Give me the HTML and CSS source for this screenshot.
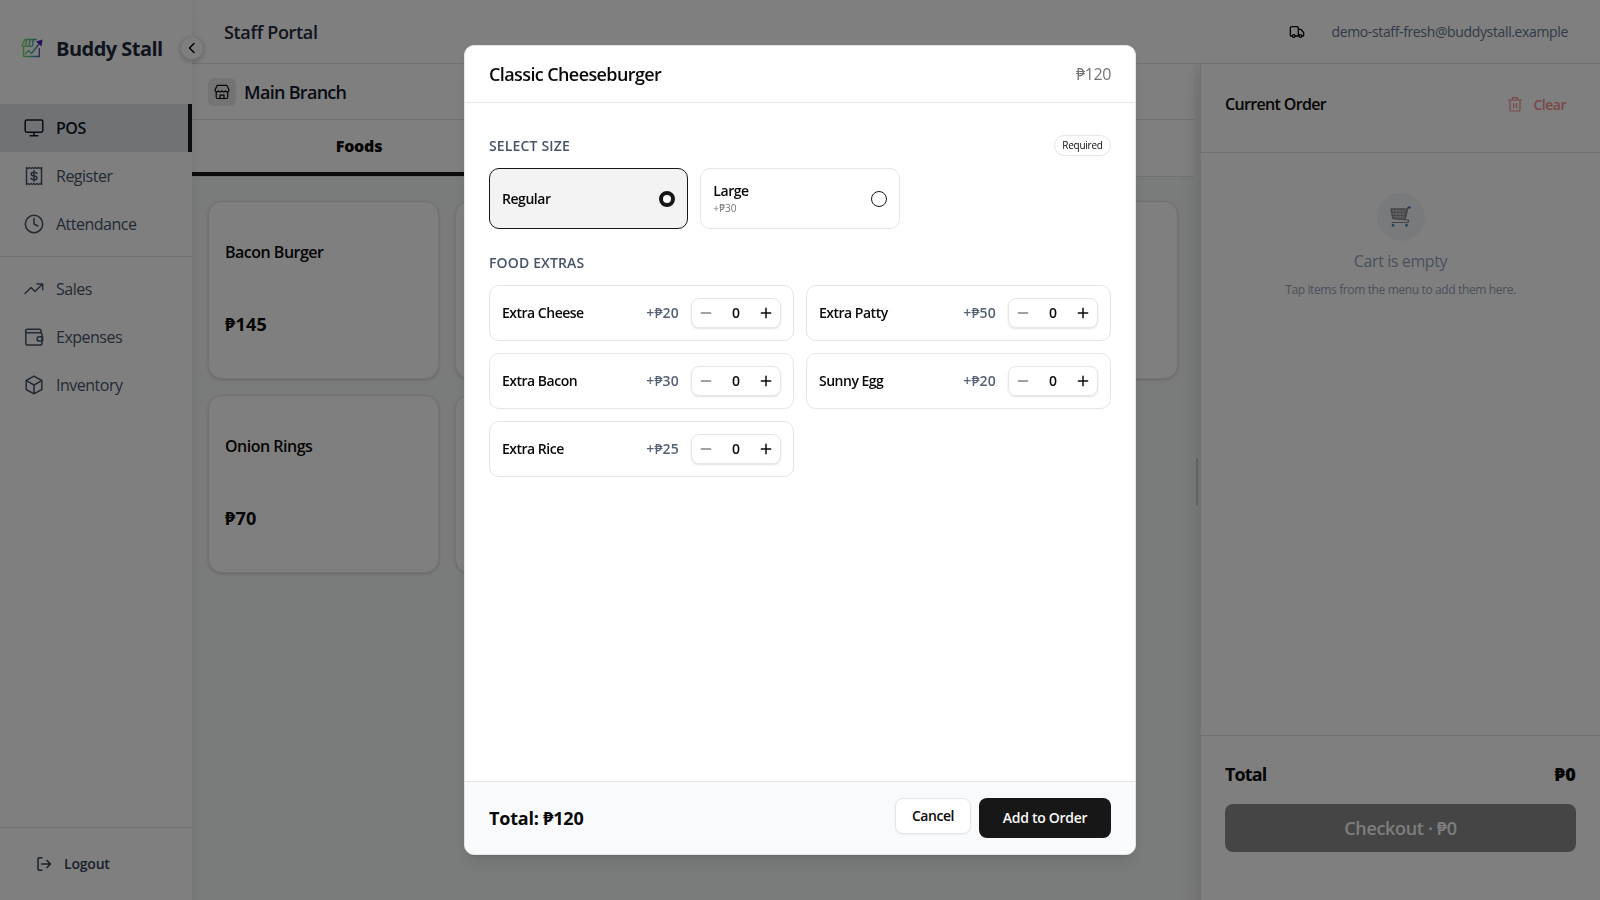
FILE: index.html
```html
<!DOCTYPE html>
<html lang="en">
<head>
    <meta charset="UTF-8">
    <title>Buddy Stall - Staff Portal</title>
    <link rel="stylesheet" href="styles.css">
</head>
<body>
    <div class="app">
        <aside class="sidebar">
            <div class="brand">
                <svg class="logo" viewBox="0 0 22 20">
                    <defs>
                        <linearGradient id="logoGradient" x1="0" y1="0" x2="22" y2="0" gradientUnits="userSpaceOnUse">
                            <stop offset="0" stop-color="#8be04a"/>
                            <stop offset="0.5" stop-color="#45b89a"/>
                            <stop offset="1" stop-color="#5b2fc0"/>
                        </linearGradient>
                    </defs>
                    <path d="M15 1.500H4L1 7c0 2 3.400 2 3.600 0 .2 2 3.400 2 3.600 0 .2 2 3.400 2 3.600 0M5.800 2L4.600 7M9 2l-.8 5M12 2l-.2 5M2.500 9.500v9h15.800v-8"/>
                    <path d="M4 16l3.500-3.500 3 3L18 6"/>
                    <path class="logo-tip" d="M15 3.500l6.500-2-1 7z"/>
                </svg>
                <h1>Buddy Stall</h1>
            </div>
            <button class="collapse" type="button">
                <svg viewBox="0 0 16 16"><path d="M10 3.500L5.500 8l4.500 4.500"/></svg>
            </button>
            <nav class="menu">
                <a class="menu-item active">
                    <svg viewBox="0 0 20 20"><rect x="1.200" y="2" width="17.600" height="12.200" rx="1.600"/><path d="M10 14.500v3M6.200 17.700h7.600"/></svg>
                    <span>POS</span>
                </a>
                <a class="menu-item">
                    <svg viewBox="0 0 20 20"><path d="M2.500 1.500l1.500 1 1.500-1 1.500 1 1.500-1 1.500 1 1.500-1 1.500 1 1.500-1 1.500 1 1.500-1v17l-1.500-1-1.500 1-1.500-1-1.500 1-1.500-1-1.500 1-1.500-1-1.500 1-1.500-1-1.500 1z"/><path d="M13 7.500C12.500 6.500 11.500 6.300 10 6.300c-3.800 0-3.800 3.600 0 3.700 3.900.1 3.900 3.700 0 3.700-1.500 0-2.600-.3-3-1.300M10 4.700v10.600"/></svg>
                    <span>Register</span>
                </a>
                <a class="menu-item">
                    <svg viewBox="0 0 20 20"><circle cx="10" cy="10" r="8.700"/><path d="M10 4.500V10l3.800 2"/></svg>
                    <span>Attendance</span>
                </a>
                <hr>
                <a class="menu-item">
                    <svg viewBox="0 0 20 20"><path d="M1 14.500l6-6 4 4 7.500-7.500M13 5h5.700v5.700"/></svg>
                    <span>Sales</span>
                </a>
                <a class="menu-item">
                    <svg viewBox="0 0 20 20"><path d="M17 5.500V4c0-1-.7-1.800-1.800-1.800H3.500C.9 2.200.9 5.700 3.500 5.700H16c1.200 0 2 .6 2 1.800v8.700c0 1-.7 1.800-1.800 1.800H3.800c-1.200 0-2-.8-2-1.800V4"/><path d="M18.600 9.800h-3.400a2.100 2.100 0 0 0 0 4.200h3.400z"/></svg>
                    <span>Expenses</span>
                </a>
                <a class="menu-item">
                    <svg viewBox="0 0 20 20"><path d="M10 1.200l7.800 4.300v9L10 18.800l-7.800-4.300v-9zM2.400 5.600L10 10l7.600-4.400M10 10v8.600"/></svg>
                    <span>Inventory</span>
                </a>
            </nav>
            <div class="logout">
                <svg viewBox="0 0 16 16"><path d="M6 1.800H3.200c-.8 0-1.200.5-1.200 1.200v10c0 .8.500 1.200 1.200 1.200H6M5.500 8h9M11 4.500L14.500 8 11 11.500"/></svg>
                <span>Logout</span>
            </div>
        </aside>

        <div class="page">
            <header class="topbar">
                <h2>Staff Portal</h2>
                <div class="account">
                    <svg viewBox="0 0 24 24"><path d="M14 18V6a2 2 0 0 0-2-2H4a2 2 0 0 0-2 2v11a1 1 0 0 0 1 1h2M15 18H9M19 18h2a1 1 0 0 0 1-1v-3.650a1 1 0 0 0-.22-.624l-3.480-4.350A1 1 0 0 0 17.520 8H14"/><circle cx="17" cy="18" r="2"/><circle cx="7" cy="18" r="2"/></svg>
                    <span>demo-staff-fresh@buddystall.example</span>
                </div>
            </header>
            <div class="workspace">
                <main class="catalog">
                    <div class="branch">
                        <span class="branch-icon">
                            <svg viewBox="0 0 16 16"><path d="M1 6l1.800-4c.2-.4.500-.600.900-.600h8.600c.4 0 .7.200.9.600L15 6c0 1.200-.8 1.800-1.700 1.800S11.500 7 11.500 7s-.8.800-1.700.8S8 7 8 7s-.8.800-1.800.8S4.500 7 4.500 7s-.9.800-1.800.8S1 7.200 1 6zM2.200 8v5c0 1 .5 1.500 1.400 1.500h8.800c.9 0 1.400-.5 1.400-1.500V8M6 14.500v-3.300h4v3.300"/></svg>
                        </span>
                        <h3>Main Branch</h3>
                    </div>
                    <div class="tabs">
                        <div class="tab selected">Foods</div>
                        <div class="tab"></div>
                        <div class="tab"></div>
                    </div>
                    <div class="products">
                        <div class="product"><h4>Bacon Burger</h4><p>₱145</p></div>
                        <div class="product"></div>
                        <div class="product"></div>
                        <div class="product"></div>
                        <div class="product"><h4>Onion Rings</h4><p>₱70</p></div>
                        <div class="product"></div>
                    </div>
                </main>
                <div class="resizer"><i></i></div>
                <section class="cart">
                    <div class="cart-header">
                        <h3>Current Order</h3>
                        <div class="clear">
                            <svg viewBox="0 0 16 16"><path d="M1.500 4h13M5.500 4V1.700h5V4M3 4v9.700c0 .7.500 1.300 1.200 1.300h7.600c.7 0 1.200-.6 1.200-1.300V4M6.600 7.500v4M9.400 7.500v4"/></svg>
                            <span>Clear</span>
                        </div>
                    </div>
                    <div class="cart-empty">
                        <div class="cart-circle">
                            <svg viewBox="0 0 22 22">
                                <path d="M1 3h16l-2 10.500-12-1z" fill="#bfc0c4" stroke="#77787e"/>
                                <path d="M4.500 3l.5 10M8 3l.3 10M11.500 3v10M14.500 3l-.8 10.500M1.500 6.200h15M2 9.500h14" stroke="#77787e" stroke-width=".8"/>
                                <path d="M20 1.500h-2L15 13.500l2 .5c2-1 2 2.500 0 2.500H2" stroke="#85757e" stroke-width="1.200"/>
                                <path d="M18.500 1.500h1.500" stroke="#2c5f9e" stroke-width="2"/>
                                <path d="M3 19v.5M16.500 19v.5" stroke="#2c6db5" stroke-width="2.600"/>
                            </svg>
                        </div>
                        <p class="empty-title">Cart is empty</p>
                        <p class="empty-hint">Tap items from the menu to add them here.</p>
                    </div>
                    <div class="cart-footer">
                        <div class="cart-total"><span>Total</span><b>₱0</b></div>
                        <button class="checkout" type="button">Checkout · ₱0</button>
                    </div>
                </section>
            </div>
        </div>
    </div>

    <div class="overlay">
        <div class="modal">
            <div class="modal-header">
                <h2>Classic Cheeseburger</h2>
                <span>₱120</span>
            </div>
            <div class="modal-body">
                <div class="group-title">
                    <h3>SELECT SIZE</h3>
                    <span class="pill">Required</span>
                </div>
                <div class="sizes">
                    <div class="size chosen">
                        <div class="size-name">Regular</div>
                        <i class="radio"></i>
                    </div>
                    <div class="size">
                        <div class="size-name">Large<small>+₱30</small></div>
                        <i class="radio"></i>
                    </div>
                </div>
                <div class="group-title extras-title">
                    <h3>FOOD EXTRAS</h3>
                </div>
                <div class="extras">
                    <div class="extra">
                        <span class="extra-name">Extra Cheese</span><span class="extra-price">+₱20</span>
                        <div class="stepper">
                            <svg class="minus" viewBox="0 0 24 24"><path d="M5 12h14"/></svg><b>0</b><svg viewBox="0 0 24 24"><path d="M5 12h14M12 5v14"/></svg>
                        </div>
                    </div>
                    <div class="extra">
                        <span class="extra-name">Extra Patty</span><span class="extra-price">+₱50</span>
                        <div class="stepper">
                            <svg class="minus" viewBox="0 0 24 24"><path d="M5 12h14"/></svg><b>0</b><svg viewBox="0 0 24 24"><path d="M5 12h14M12 5v14"/></svg>
                        </div>
                    </div>
                    <div class="extra">
                        <span class="extra-name">Extra Bacon</span><span class="extra-price">+₱30</span>
                        <div class="stepper">
                            <svg class="minus" viewBox="0 0 24 24"><path d="M5 12h14"/></svg><b>0</b><svg viewBox="0 0 24 24"><path d="M5 12h14M12 5v14"/></svg>
                        </div>
                    </div>
                    <div class="extra">
                        <span class="extra-name">Sunny Egg</span><span class="extra-price">+₱20</span>
                        <div class="stepper">
                            <svg class="minus" viewBox="0 0 24 24"><path d="M5 12h14"/></svg><b>0</b><svg viewBox="0 0 24 24"><path d="M5 12h14M12 5v14"/></svg>
                        </div>
                    </div>
                    <div class="extra">
                        <span class="extra-name">Extra Rice</span><span class="extra-price">+₱25</span>
                        <div class="stepper">
                            <svg class="minus" viewBox="0 0 24 24"><path d="M5 12h14"/></svg><b>0</b><svg viewBox="0 0 24 24"><path d="M5 12h14M12 5v14"/></svg>
                        </div>
                    </div>
                </div>
            </div>
            <div class="modal-footer">
                <strong>Total: ₱120</strong>
                <button class="cancel" type="button">Cancel</button>
                <button class="add" type="button">Add to Order</button>
            </div>
        </div>
    </div>
</body>
</html>
```
FILE: styles.css
```css
* {
    box-sizing: border-box;
}
body {
    margin: 0;
    height: 900px;
    overflow: hidden;
    font-family: "Open Sans", "Noto Sans", sans-serif;
    font-size: 14px;
    color: #0a0a0a;
}
h1, h2, h3, h4, p {
    margin: 0;
}
button {
    font-family: inherit;
    padding: 0;
}
svg {
    fill: none;
    stroke: currentColor;
    stroke-width: 1.5;
    stroke-linecap: round;
    stroke-linejoin: round;
    flex-shrink: 0;
}
.app {
    display: flex;
    height: 900px;
    background-color: #f5f6f7;
}

/* sidebar */
.sidebar {
    position: relative;
    z-index: 2;
    display: flex;
    flex-direction: column;
    width: 192px;
    background-color: white;
    box-shadow: 0 4px 12px rgba(0, 0, 0, 0.08);
}
.brand {
    display: flex;
    align-items: center;
    height: 96px;
    padding-left: 21px;
    gap: 13px;
}
.logo {
    width: 22px;
    height: 20px;
    stroke: url(#logoGradient);
    stroke-width: 1.4;
}
.logo-tip {
    fill: #4a24b0;
    stroke: none;
}
.brand h1 {
    font-size: 20px;
    font-weight: 700;
    letter-spacing: -0.53px;
    color: #1e293b;
}
.collapse {
    position: absolute;
    left: 180px;
    top: 36px;
    width: 24px;
    height: 24px;
    border: 1px solid #e5e5e5;
    border-radius: 50%;
    background-color: white;
    box-shadow: 0 2px 5px rgba(0, 0, 0, 0.2);
    display: flex;
    align-items: center;
    justify-content: center;
}
.collapse svg {
    width: 16px;
    height: 16px;
}
.menu {
    flex: 1;
    padding-top: 8px;
}
.menu hr {
    margin: 8px 0;
    border: none;
    border-top: 1px solid #e2e4e8;
}
.menu-item {
    display: flex;
    align-items: center;
    height: 48px;
    padding-left: 24px;
    gap: 12px;
    font-size: 16px;
    letter-spacing: -0.5px;
    color: #475569;
}
.menu-item svg {
    width: 20px;
    height: 20px;
}
.menu-item.active {
    background-color: #e2e5e9;
    border-right: 4px solid #171717;
    color: #0f172a;
    font-weight: 550;
}
.logout {
    display: flex;
    align-items: center;
    gap: 12px;
    height: 73px;
    padding-left: 36px;
    padding-bottom: 1px;
    border-top: 1px solid #e2e4e8;
    color: #334155;
    font-weight: 600;
    letter-spacing: -0.2px;
}
.logout svg {
    width: 16px;
    height: 16px;
}

/* top bar */
.page {
    flex: 1;
    display: flex;
    flex-direction: column;
}
.topbar {
    display: flex;
    align-items: center;
    justify-content: space-between;
    height: 64px;
    padding: 0 32px;
    background-color: white;
    border-bottom: 1px solid #e2e4e8;
}
.topbar h2 {
    font-size: 18px;
    font-weight: 550;
    letter-spacing: -0.33px;
    color: #1e293b;
}
.account {
    display: flex;
    align-items: center;
    gap: 26px;
    color: #64748b;
    letter-spacing: -0.36px;
}
.account svg {
    width: 16px;
    height: 16px;
    color: #0a0a0a;
    stroke-width: 2;
}
.workspace {
    flex: 1;
    display: flex;
}

/* catalog */
.catalog {
    width: 1002px;
}
.branch {
    display: flex;
    align-items: center;
    gap: 8px;
    height: 56px;
    padding-left: 16px;
    background-color: white;
    border-bottom: 1px solid #e2e4e8;
}
.branch-icon {
    display: flex;
    align-items: center;
    justify-content: center;
    width: 28px;
    height: 28px;
    border-radius: 6px;
    background-color: #e8e8e8;
}
.branch-icon svg {
    width: 16px;
    height: 16px;
    stroke-width: 1.2;
}
.branch h3 {
    font-size: 18px;
    font-weight: 600;
    letter-spacing: -0.7px;
    color: #0f172a;
}
.tabs {
    display: flex;
    height: 57px;
    background-color: white;
    border-bottom: 1px solid #e2e4e8;
}
.tab {
    flex: 1;
    display: flex;
    align-items: center;
    justify-content: center;
    border-bottom: 4px solid transparent;
    font-size: 16px;
}
.tab.selected {
    border-bottom-color: #171717;
    font-weight: 800;
    letter-spacing: -0.2px;
}
.products {
    display: grid;
    grid-template-columns: repeat(4, 1fr);
    grid-auto-rows: 178px;
    gap: 16px;
    padding: 24px 16px;
}
.product {
    display: flex;
    flex-direction: column;
    justify-content: space-between;
    padding: 38px 16px 40px;
    border: 1px solid #e5e5e5;
    border-radius: 14px;
    background-color: white;
    box-shadow: 0 1px 3px rgba(0, 0, 0, 0.15);
}
.product h4 {
    font-size: 16px;
    line-height: 24px;
    font-weight: 600;
    letter-spacing: -0.5px;
}
.product p {
    font-size: 18px;
    line-height: 28px;
    font-weight: 700;
    letter-spacing: 0.2px;
}
.resizer {
    display: flex;
    align-items: center;
    justify-content: center;
    width: 6px;
}
.resizer i {
    width: 2px;
    height: 48px;
    border-radius: 2px;
    background-color: #cfd0d2;
}

/* cart */
.cart {
    flex: 1;
    display: flex;
    flex-direction: column;
    background-color: white;
    border-left: 1px solid #e2e4e8;
    box-shadow: 0 10px 20px rgba(0, 0, 0, 0.15);
}
.cart-header {
    display: flex;
    justify-content: space-between;
    height: 89px;
    padding: 24px 34px 0 24px;
    border-bottom: 1px solid #e2e4e8;
}
.cart-header h3 {
    font-size: 16px;
    line-height: 32px;
    font-weight: 600;
    letter-spacing: -0.65px;
}
.clear {
    display: flex;
    align-items: center;
    gap: 10px;
    height: 32px;
    color: #f38f93;
    font-weight: 600;
    letter-spacing: -0.5px;
}
.clear svg {
    width: 16px;
    height: 16px;
    stroke-width: 1.2;
}
.cart-empty {
    flex: 1;
    display: flex;
    flex-direction: column;
    align-items: center;
    padding-top: 40px;
    color: #94a3b8;
}
.cart-circle {
    display: flex;
    align-items: center;
    justify-content: center;
    width: 48px;
    height: 48px;
    margin-bottom: 8px;
    border-radius: 50%;
    background-color: #f1f5f9;
}
.cart-circle svg {
    width: 22px;
    height: 22px;
    opacity: 0.85;
}
.empty-title {
    font-size: 16px;
    line-height: 24px;
    letter-spacing: -0.4px;
}
.empty-hint {
    margin-top: 8px;
    font-size: 12px;
    line-height: 18px;
    letter-spacing: -0.37px;
}
.cart-footer {
    height: 165px;
    padding: 24px 24px 0;
    border-top: 1px solid #e2e4e8;
}
.cart-total {
    display: flex;
    justify-content: space-between;
    margin-bottom: 16px;
    font-size: 18px;
    line-height: 28px;
    font-weight: 700;
    letter-spacing: -0.9px;
}
.cart-total b {
    letter-spacing: 0.2px;
}
.checkout {
    width: 100%;
    height: 48px;
    border: none;
    border-radius: 8px;
    background-color: #8b8b8b;
    color: #fafafa;
    font-size: 18px;
    font-weight: 600;
    letter-spacing: -0.33px;
}

/* item dialog */
.overlay {
    position: fixed;
    inset: 0;
    z-index: 10;
    display: flex;
    align-items: center;
    justify-content: center;
    background-color: rgba(0, 0, 0, 0.5);
}
.modal {
    display: flex;
    flex-direction: column;
    width: 672px;
    height: 810px;
    border: 1px solid #e5e5e5;
    border-radius: 10px;
    background-color: white;
    box-shadow: 0 10px 15px -3px rgba(0, 0, 0, 0.1), 0 4px 6px -4px rgba(0, 0, 0, 0.1);
    overflow: hidden;
}
.modal-header {
    display: flex;
    align-items: center;
    justify-content: space-between;
    height: 57px;
    padding: 0 24px;
    border-bottom: 1px solid #e5e5e5;
}
.modal-header h2 {
    font-size: 18px;
    font-weight: 600;
    letter-spacing: -0.6px;
}
.modal-header span {
    font-size: 16px;
    letter-spacing: -0.4px;
    color: #737373;
}
.modal-body {
    flex: 1;
    padding: 32px 24px;
}
.group-title {
    display: flex;
    align-items: center;
    justify-content: space-between;
    height: 21px;
}
.group-title h3 {
    font-size: 14px;
    font-weight: 600;
    letter-spacing: 0.15px;
    color: #475569;
}
.pill {
    width: 57px;
    height: 21px;
    border: 1px solid #e5e5e5;
    border-radius: 11px;
    font-size: 10px;
    font-weight: 500;
    line-height: 19px;
    text-align: center;
    letter-spacing: -0.25px;
}
.sizes {
    display: grid;
    grid-template-columns: repeat(3, 1fr);
    gap: 12px;
    margin-top: 12px;
}
.size {
    display: flex;
    align-items: center;
    justify-content: space-between;
    height: 61px;
    padding: 0 12px;
    border: 1px solid #e5e5e5;
    border-radius: 10px;
}
.size-name {
    font-weight: 600;
    line-height: 20px;
    letter-spacing: -0.45px;
}
.size-name small {
    display: block;
    font-size: 10px;
    font-weight: 400;
    line-height: 15px;
    letter-spacing: 0.1px;
    color: #737373;
}
.radio {
    width: 16px;
    height: 16px;
    border: 1px solid #171717;
    border-radius: 50%;
}
.size.chosen {
    border-color: #171717;
    background-color: #f3f3f3;
}
.size.chosen .radio {
    border-width: 4px;
    background-color: white;
}
.extras-title {
    margin-top: 23px;
}
.extras {
    display: grid;
    grid-template-columns: 1fr 1fr;
    grid-auto-rows: 56px;
    gap: 12px;
    margin-top: 12px;
}
.extra {
    display: flex;
    align-items: center;
    padding: 0 12px;
    border: 1px solid #e5e5e5;
    border-radius: 10px;
    font-weight: 600;
    line-height: 20px;
    letter-spacing: -0.5px;
}
.extra-name, .extra-price {
    padding-bottom: 1px;
}
.extra-name {
    flex: 1;
}
.extra-price {
    margin-right: 12px;
    font-weight: 550;
    letter-spacing: 0.2px;
    color: #556274;
}
.stepper {
    display: flex;
    align-items: center;
    justify-content: space-between;
    width: 90px;
    height: 30px;
    padding: 0 6px;
    border: 1px solid #e5e5e5;
    border-radius: 8px;
    box-shadow: 0 1px 2px rgba(0, 0, 0, 0.12);
}
.stepper b {
    padding-bottom: 1px;
    font-weight: 600;
    letter-spacing: 0;
}
.stepper svg {
    width: 16px;
    height: 16px;
    stroke-width: 2.2;
}
.stepper .minus {
    opacity: 0.5;
}
.modal-footer {
    display: flex;
    align-items: flex-start;
    gap: 8px;
    height: 73px;
    padding: 16px 24px;
    border-top: 1px solid #e2e4e8;
    background-color: #f8fafc;
}
.modal-footer strong {
    flex: 1;
    font-size: 18px;
    line-height: 40px;
    font-weight: 700;
    letter-spacing: -0.2px;
}
.modal-footer button {
    padding-bottom: 1px;
    border-radius: 8px;
    font-size: 14px;
    font-weight: 600;
    letter-spacing: -0.3px;
}
.modal-footer .cancel {
    width: 76px;
    height: 36px;
    border: 1px solid #e5e5e5;
    background-color: white;
    color: #0a0a0a;
    letter-spacing: -0.45px;
    box-shadow: 0 1px 2px rgba(0, 0, 0, 0.05);
}
.add {
    width: 132px;
    height: 40px;
    border: none;
    background-color: #171717;
    color: #fafafa;
}
```
